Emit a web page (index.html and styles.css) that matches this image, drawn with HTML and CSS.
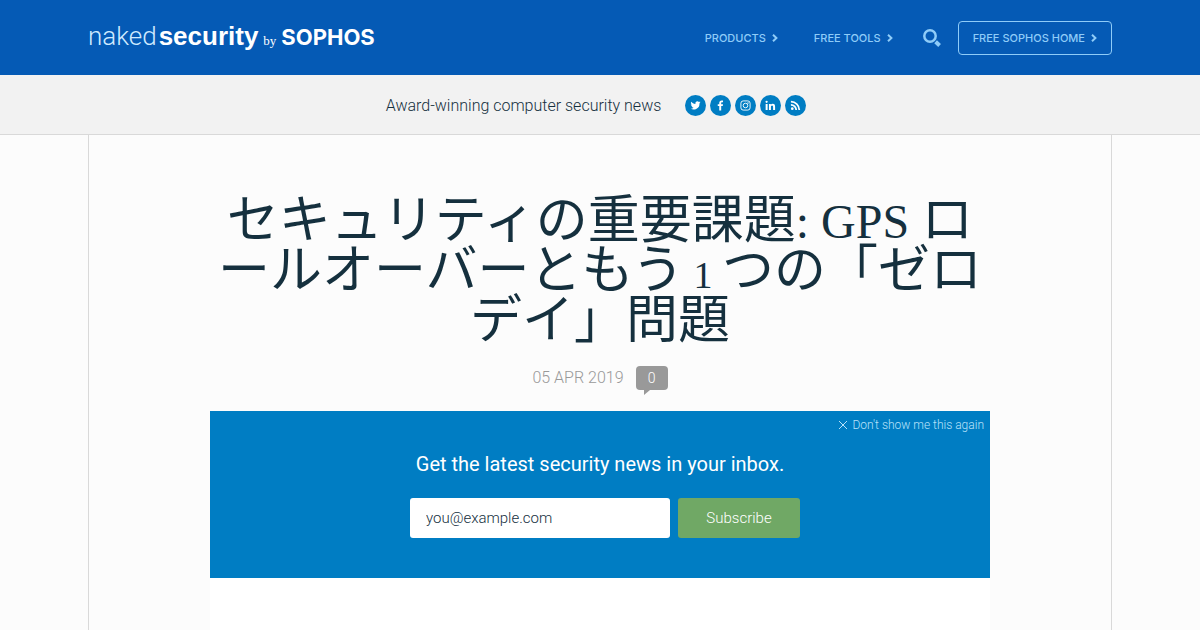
FILE: index.html
```html
<!DOCTYPE html>
<html lang="ja">
<head>
<meta charset="utf-8">
<meta name="viewport" content="width=device-width, initial-scale=1">
<title>Naked Security</title>
<link rel="stylesheet" href="styles.css">
</head>
<body>
<header class="masthead">
  <div class="wrap masthead-row">
    <a class="logo" href="#"><span class="logo-naked">naked</span><span class="logo-security">security</span><span class="logo-by">by</span><span class="logo-sophos">SOPHOS</span></a>
    <nav class="nav">
      <a class="nav-link" href="#">PRODUCTS<svg class="chevron" viewBox="0 0 6 8"><path d="M1 .8 4.4 4 1 7.2"/></svg></a>
      <a class="nav-link" href="#">FREE TOOLS<svg class="chevron" viewBox="0 0 6 8"><path d="M1 .8 4.4 4 1 7.2"/></svg></a>
      <button class="search" type="button" aria-label="Search"><svg viewBox="0 0 18 18"><circle cx="7" cy="7" r="5.7"/><path d="m12.6 12.8 4 3.6" class="handle"/></svg></button>
      <a class="nav-button" href="#">FREE SOPHOS HOME<svg class="chevron" viewBox="0 0 6 8"><path d="M1 .8 4.4 4 1 7.2"/></svg></a>
    </nav>
  </div>
</header>
<div class="tagline">
  <p class="tagline-text">Award-winning computer security news</p>
  <div class="social">
    <a class="social-link" href="#" aria-label="Twitter"><svg viewBox="0 0 24 24"><path d="M23 5.1c-.8.4-1.700.6-2.600.7.9-.6 1.600-1.400 2-2.500-.9.500-1.800.9-2.900 1.100A4.500 4.500 0 0 0 11.800 8.500C8 8.300 4.700 6.500 2.500 3.800a4.500 4.500 0 0 0 1.400 6c-.7 0-1.400-.2-2-.6 0 2.200 1.500 4.100 3.600 4.500-.7.2-1.400.2-2 .1.600 1.800 2.200 3.100 4.200 3.100A9 9 0 0 1 1 18.800 12.800 12.800 0 0 0 20.700 7.400C21.600 6.800 22.400 6 23 5.100z"/></svg></a>
    <a class="social-link" href="#" aria-label="Facebook"><svg viewBox="0 0 24 24"><path d="M9.300 23V13H6V9h3.300V6.300C9.300 3 11.300 1 14.500 1c1.400 0 2.500.1 3 .2v3.600h-2c-1.600 0-2 .8-2 2V9h4l-.6 4h-3.400v10z"/></svg></a>
    <a class="social-link" href="#" aria-label="Instagram"><svg viewBox="0 0 24 24"><g fill="none" stroke="#fff" stroke-width="2"><rect x="2" y="2" width="20" height="20" rx="5"/><circle cx="12" cy="12" r="5"/></g><circle cx="17.500" cy="6.500" r="1.500"/></svg></a>
    <a class="social-link" href="#" aria-label="LinkedIn"><svg viewBox="0 0 24 24"><circle cx="3.500" cy="4" r="2.500"/><path d="M1.400 8.500h4.300V22H1.400zM8.600 8.500h4.100v1.800c.8-1.300 2.200-2.100 4.100-2.100 4.200 0 5.200 2.700 5.200 6.300V22h-4.300v-6.600c0-1.900-.2-3.600-2.300-3.600s-2.500 1.600-2.500 3.500V22H8.600z"/></svg></a>
    <a class="social-link" href="#" aria-label="RSS"><svg viewBox="0 0 24 24"><circle cx="5" cy="19" r="3"/><path d="M2 10.500A11.500 11.500 0 0 1 13.500 22M2 3.700A18.300 18.300 0 0 1 20.300 22" fill="none" stroke="#fff" stroke-width="3.800"/></svg></a>
  </div>
</div>
<main class="wrap page">
  <article class="article">
    <h1 class="title">セキュリティの重要課題<span class="latin">: GPS </span>ロールオーバーともう<span class="numeral"> 1 </span>つの「ゼロデイ」問題</h1>
    <div class="meta">
      <time datetime="2019-04-05">05 APR 2019</time>
      <a class="comments" href="#">0</a>
    </div>
    <section class="signup">
      <button class="dismiss" type="button"><svg viewBox="0 0 10 10"><path d="m1 1 8 8M9 1 1 9"/></svg>Don't show me this again</button>
      <form class="signup-form">
        <label class="signup-label" for="email">Get the latest security news in your inbox.</label>
        <div class="signup-row">
          <input class="email" id="email" type="email" placeholder="you@example.com">
          <button class="subscribe" type="button">Subscribe</button>
        </div>
      </form>
    </section>
    <div class="content"></div>
  </article>
</main>
</body>
</html>
```
FILE: styles.css
```css
* { box-sizing: border-box; }
body {
  margin: 0;
  min-height: 100vh;
  display: flex;
  flex-direction: column;
  background: #fcfcfc;
  color: #15303e;
  font-family: Roboto, "Noto Sans CJK JP", sans-serif;
  font-size: 16px;
  font-weight: 300;
}
a { color: inherit; text-decoration: none; }
button { font: inherit; cursor: pointer; }
.wrap { width: 100%; max-width: 1024px; margin: 0 auto; }
.masthead { background: #055ab5; }
.masthead-row { display: flex; align-items: center; justify-content: space-between; height: 75px; }
.logo { display: flex; align-items: baseline; padding-top: 2px; color: #fff; line-height: 32px; white-space: nowrap; }
.logo-naked { font-size: 26px; color: #cfeaff; font-weight: 300; }
.logo-security { margin-left: 2px; font-family: "Liberation Sans", sans-serif; font-size: 26px; font-weight: 700; }
.logo-by { margin: 0 5px; font-family: "Liberation Serif", serif; font-size: 13px; }
.logo-sophos { font-family: Inter, sans-serif; font-size: 22px; font-weight: 700; }
.nav { display: flex; align-items: center; color: #8fccf8; font-family: Inter, sans-serif; font-size: 11px; font-weight: 500; line-height: 16px; white-space: nowrap; }
.nav-link { display: flex; align-items: center; margin-right: 36px; }
.nav-link:nth-child(2) { margin-right: 30px; }
.chevron { width: 6px; height: 8px; margin-left: 6px; fill: none; stroke: currentColor; stroke-width: 2; }
.search { width: 18px; height: 18px; margin-right: 17px; padding: 0; border: 0; background: none; color: inherit; }
.search svg { display: block; fill: none; stroke: currentColor; stroke-width: 2.500; }
.search .handle { stroke-width: 4; }
.nav-button { display: flex; align-items: center; height: 34px; padding: 0 14px; border: 1px solid #8fccf8; border-radius: 4px; }
.tagline { display: flex; align-items: center; justify-content: center; gap: 24px; min-height: 60px; padding: 2px 8px 0 0; background: #f2f2f2; border-bottom: 1px solid #d9d9d9; }
.tagline-text { margin: 0; }
.social { display: flex; gap: 4px; }
.social-link { display: flex; align-items: center; justify-content: center; width: 21px; height: 21px; border-radius: 50%; background: #007dc3; }
.social-link svg { width: 11px; height: 11px; fill: #fff; }
.page { flex: 1; display: flex; justify-content: center; border: solid #d9d9d9; border-width: 0 1px; }
.article { display: flex; flex-direction: column; width: 100%; max-width: 780px; padding-top: 61px; }
.title { margin: 0; font-family: "Liberation Serif", "Noto Sans CJK JP", sans-serif; font-size: 52px; font-weight: 400; line-height: 50px; text-align: center; line-break: anywhere; }
.latin, .numeral { font-size: 48px; line-height: 0; }
.numeral { font-size: 38px; }
.meta { display: flex; align-items: center; justify-content: center; gap: 12px; margin-top: 20px; color: #999; line-height: 24px; }
.comments { position: relative; width: 32px; height: 24px; border-radius: 4px; background: #999; color: #fff; font-size: 14px; text-align: center; }
.comments::after { content: ""; position: absolute; top: 100%; left: 8px; border-top: 5px solid #999; border-right: 6px solid transparent; }
.signup { display: flex; flex-direction: column; margin-top: 21px; padding: 6px 6px 40px; background: #007dc3; color: #fff; }
.dismiss { display: flex; align-items: center; align-self: flex-end; gap: 4px; padding: 0; border: 0; background: none; color: #b9e2fa; font-size: 12px; line-height: 16px; }
.dismiss svg { width: 10px; height: 10px; fill: none; stroke: currentColor; }
.signup-form { display: flex; flex-direction: column; align-items: center; margin-top: 19px; }
.signup-label { font-size: 20px; font-weight: 400; line-height: 24px; }
.signup-row { display: flex; gap: 8px; width: 100%; max-width: 400px; margin-top: 22px; padding-left: 10px; }
.email { flex: 1; min-width: 0; height: 40px; padding: 0 16px; border: 0; border-radius: 3px; background: #fff; font: inherit; font-size: 15px; }
.email::placeholder { color: #15303e; opacity: 1; }
.subscribe { width: 122px; padding: 0; border: 0; border-radius: 3px; background: #70a865; color: #fff; font-size: 15px; }
.content { flex: 1; background: #fff; }
```
